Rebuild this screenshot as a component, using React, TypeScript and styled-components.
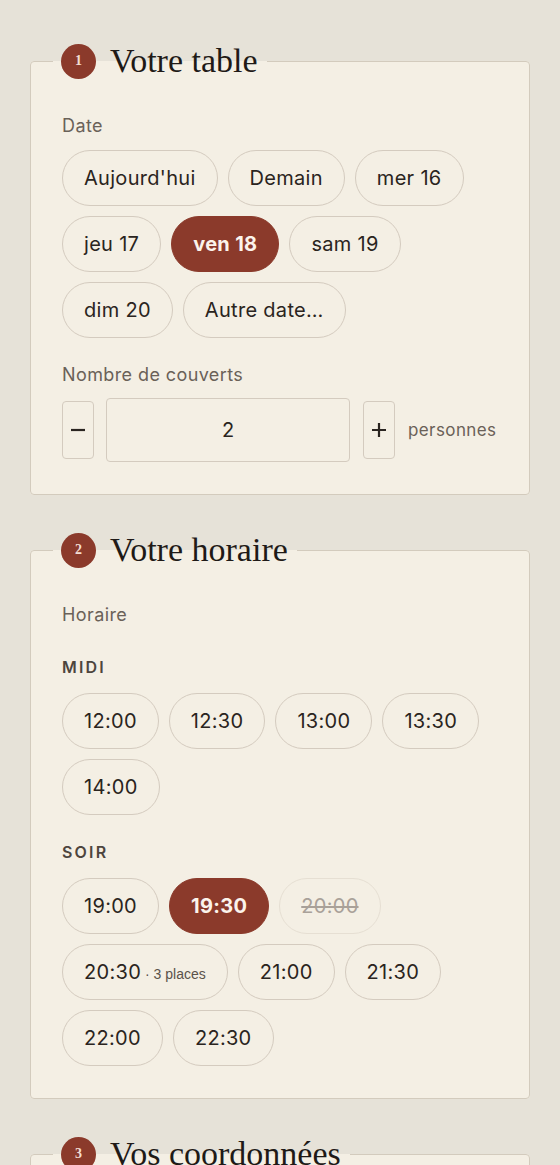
import React from "react";
import styled, { createGlobalStyle } from "styled-components";

const Global = createGlobalStyle`
  html, body { margin: 0; padding: 0; }
  body {
    background: #e6e2d8;
    font-family: Inter, "Noto Sans", sans-serif;
    color: #2a2420;
  }
  * { box-sizing: border-box; }
`;

const Page = styled.main`
  display: flex;
  flex-direction: column;
  gap: 36px;
  padding: 42px 30px 0 30px;
  width: 560px;
`;

const Card = styled.fieldset`
  margin: 0;
  padding: 34px 31px 32px 31px;
  border: 1px solid #d3cbbd;
  border-radius: 4px;
  background: #f4efe4;
  min-width: 0;
`;

const Legend = styled.legend`
  display: flex;
  align-items: center;
  gap: 14px;
  padding: 0 9px 0 8px;
  margin-left: -9px;
  height: 38px;
`;

const StepBadge = styled.span`
  display: inline-flex;
  align-items: center;
  justify-content: center;
  width: 35px;
  height: 35px;
  border-radius: 50%;
  background: #8b3a2b;
  color: #f3ddd2;
  font-family: "Liberation Serif", serif;
  font-weight: 700;
  font-size: 14px;
`;

const Title = styled.span`
  font-family: "Liberation Serif", serif;
  font-size: 34px;
  line-height: 38px;
  color: #1f1a17;
`;

const Label = styled.div<{ $gap?: number }>`
  font-size: 18px;
  line-height: 24px;
  letter-spacing: 0.4px;
  color: #6a6158;
  margin-bottom: ${(p) => p.$gap ?? 12}px;
`;

const SubHead = styled.div<{ $top?: number }>`
  font-size: 16px;
  line-height: 20px;
  font-weight: 600;
  letter-spacing: 2.2px;
  color: #4d453e;
  margin-top: ${(p) => p.$top ?? 0}px;
  margin-bottom: 16px;
`;

const PillGroup = styled.div<{ $bottom?: number }>`
  display: flex;
  flex-wrap: wrap;
  gap: 10px;
  margin-bottom: ${(p) => p.$bottom ?? 0}px;
`;

const Pill = styled.button<{ $selected?: boolean; $disabled?: boolean }>`
  height: 56px;
  padding: 0 21px;
  border-radius: 28px;
  border: 1.5px solid
    ${(p) => (p.$selected ? "#8b3a2b" : p.$disabled ? "#e6dfd3" : "#d4cbbf")};
  background: ${(p) => (p.$selected ? "#8b3a2b" : "transparent")};
  color: ${(p) => (p.$selected ? "#fbf3ec" : p.$disabled ? "#a9a199" : "#2a2420")};
  font-family: inherit;
  font-size: 20px;
  letter-spacing: 0.3px;
  font-weight: ${(p) => (p.$selected ? 700 : 400)};
  text-decoration: ${(p) => (p.$disabled ? "line-through" : "none")};
  display: inline-flex;
  align-items: center;
  cursor: pointer;
`;

const Places = styled.span`
  font-family: "Liberation Sans", Arial, sans-serif;
  font-size: 14px;
  letter-spacing: 0;
  color: #5a524a;
  margin-left: 4px;
  position: relative;
  top: 2px;
`;

const Stepper = styled.div`
  display: flex;
  align-items: center;
`;

const StepButton = styled.button`
  width: 32px;
  height: 58px;
  border: 1.5px solid #d4cbbf;
  border-radius: 4px;
  background: transparent;
  color: #2a2420;
  padding: 0;
  display: inline-flex;
  align-items: center;
  justify-content: center;
`;

const CountBox = styled.div`
  width: 244px;
  height: 64px;
  margin: 0 13px 0 12px;
  border: 1.5px solid #d4cbbf;
  border-radius: 4px;
  display: flex;
  align-items: center;
  justify-content: center;
  font-size: 20px;
`;

const Unit = styled.span`
  margin-left: 13px;
  font-size: 17px;
  letter-spacing: 0.4px;
  color: #6a6158;
`;

const Icon = ({ d }: { d: string }) => (
  <svg width="18" height="18" viewBox="0 0 18 18" fill="none" stroke="#2a2420" strokeWidth="2.2">
    <path d={d} />
  </svg>
);

const dates = ["Aujourd'hui", "Demain", "mer 16", "jeu 17", "ven 18", "sam 19", "dim 20", "Autre date…"];
const midi = ["12:00", "12:30", "13:00", "13:30", "14:00"];
const soir = ["19:00", "19:30", "20:00", "20:30", "21:00", "21:30", "22:00", "22:30"];

export default function App() {
  return (
    <>
      <Global />
      <Page>
        <Card>
          <Legend>
            <StepBadge>1</StepBadge>
            <Title>Votre table</Title>
          </Legend>
          <Label>Date</Label>
          <PillGroup $bottom={25}>
            {dates.map((d) => (
              <Pill key={d} $selected={d === "ven 18"}>
                {d}
              </Pill>
            ))}
          </PillGroup>
          <Label $gap={11}>Nombre de couverts</Label>
          <Stepper>
            <StepButton aria-label="moins">
              <Icon d="M2 9h14" />
            </StepButton>
            <CountBox>2</CountBox>
            <StepButton aria-label="plus">
              <Icon d="M2 9h14M9 2v14" />
            </StepButton>
            <Unit>personnes</Unit>
          </Stepper>
        </Card>

        <Card>
          <Legend>
            <StepBadge>2</StepBadge>
            <Title>Votre horaire</Title>
          </Legend>
          <Label $gap={30}>Horaire</Label>
          <SubHead>MIDI</SubHead>
          <PillGroup>
            {midi.map((t) => (
              <Pill key={t}>{t}</Pill>
            ))}
          </PillGroup>
          <SubHead $top={27}>SOIR</SubHead>
          <PillGroup>
            {soir.map((t) => (
              <Pill key={t} $selected={t === "19:30"} $disabled={t === "20:00"}>
                {t}
                {t === "20:30" && <Places>· 3 places</Places>}
              </Pill>
            ))}
          </PillGroup>
        </Card>

        <Card>
          <Legend>
            <StepBadge>3</StepBadge>
            <Title>Vos coordonnées</Title>
          </Legend>
          <Label>Nom</Label>
        </Card>
      </Page>
    </>
  );
}
